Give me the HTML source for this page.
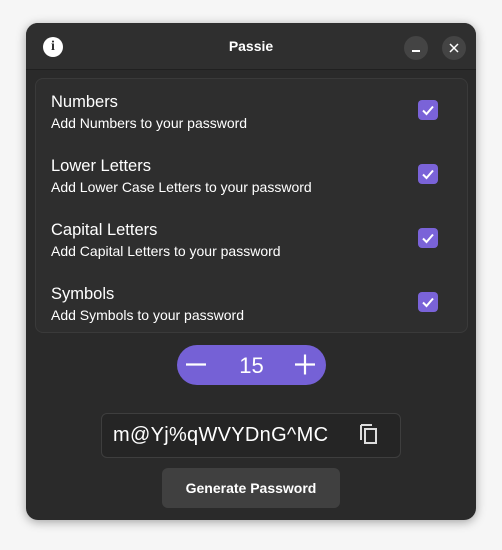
<!DOCTYPE html>
<html><head><style>
body{margin:0;width:502px;height:550px;background:#f6f6f6;font-family:"Liberation Sans",sans-serif;position:relative;overflow:hidden}
.win{position:absolute;left:26px;top:23px;width:450px;height:497px;background:#2a2a2a;border-radius:12px;box-shadow:0 2px 10px rgba(0,0,0,.35);overflow:hidden;color:#fff}
.hdr{position:absolute;left:0;top:0;width:450px;height:46px;background:#2f2f2f;border-bottom:1px solid #202020}
.title{position:absolute;left:0;width:450px;top:15px;text-align:center;font-weight:bold;font-size:14px}
.info{position:absolute;left:17px;top:14px;width:20px;height:20px;border-radius:50%;background:#fff;color:#2f2f2f;font-weight:bold;font-size:14px;text-align:center;line-height:20px;font-family:"Liberation Serif",serif}
.cb{position:absolute;top:13px;width:24px;height:24px;border-radius:50%;background:#444}
.card{position:absolute;left:9px;top:55px;width:431px;height:253px;background:#2e2e2e;border:1px solid #3a3a3a;border-radius:8px}
.row{position:absolute;left:15px}
.row .t{font-size:16.5px;line-height:20px}
.row .s{font-size:14px;line-height:18px;margin-top:2px}
.chk{position:absolute;left:382px;width:20px;height:20px;background:#7a63d8;border-radius:4px}
.spin{position:absolute;left:151px;top:322px;width:149px;height:40px;background:#7561d6;border-radius:20px}
.entry{position:absolute;left:75px;top:390px;width:298px;height:43px;border:1px solid #3e3e3e;border-radius:6px;background:#252525}
.btn{position:absolute;left:136px;top:445px;width:178px;height:40px;background:#404040;border-radius:6px;text-align:center;line-height:40px;font-weight:bold;font-size:14px}
</style></head><body>
<div class="win">
 <div class="hdr">
  <div class="info">i</div>
  <div class="title">Passie</div>
  <div class="cb" style="left:378px"><div style="position:absolute;left:8px;top:14px;width:8px;height:1.5px;background:#fff"></div></div>
  <div class="cb" style="left:416px"><svg width="24" height="24" style="position:absolute;left:0;top:0"><path d="M8 8L16 16M16 8L8 16" stroke="#fff" stroke-width="1.5"/></svg></div>
 </div>
 <div class="card">
  <div class="row" style="top:13px"><div class="t">Numbers</div><div class="s">Add Numbers to your password</div></div>
  <div class="row" style="top:77px"><div class="t">Lower Letters</div><div class="s">Add Lower Case Letters to your password</div></div>
  <div class="row" style="top:141px"><div class="t">Capital Letters</div><div class="s">Add Capital Letters to your password</div></div>
  <div class="row" style="top:205px"><div class="t">Symbols</div><div class="s">Add Symbols to your password</div></div>
  <div class="chk" style="top:21px"><svg width="20" height="20"><path d="M5 10.5L8.5 14L15 6.5" stroke="#fff" stroke-width="2" fill="none"/></svg></div>
  <div class="chk" style="top:85px"><svg width="20" height="20"><path d="M5 10.5L8.5 14L15 6.5" stroke="#fff" stroke-width="2" fill="none"/></svg></div>
  <div class="chk" style="top:149px"><svg width="20" height="20"><path d="M5 10.5L8.5 14L15 6.5" stroke="#fff" stroke-width="2" fill="none"/></svg></div>
  <div class="chk" style="top:213px"><svg width="20" height="20"><path d="M5 10.5L8.5 14L15 6.5" stroke="#fff" stroke-width="2" fill="none"/></svg></div>
 </div>
 <div class="spin">
  <svg width="149" height="40" style="position:absolute;left:0;top:0"><path d="M9 19.5H29M118 19.5H138M128 9.5V29.5" stroke="#fff" stroke-width="2.2"/></svg>
  <div style="position:absolute;left:0;width:149px;text-align:center;top:8px;font-size:22px">15</div>
 </div>
 <div class="entry">
  <div style="position:absolute;left:11px;top:10px;font-size:20px;letter-spacing:.3px">m@Yj%qWVYDnG^MC</div>
  <svg width="24" height="26" style="position:absolute;left:256px;top:8px"><path d="M3 3H14M3 3V18" stroke="#ddd" stroke-width="2" fill="none"/><rect x="7" y="7" width="11" height="14" stroke="#ddd" stroke-width="2" fill="none"/></svg>
 </div>
 <div class="btn">Generate Password</div>
</div>
</body></html>
